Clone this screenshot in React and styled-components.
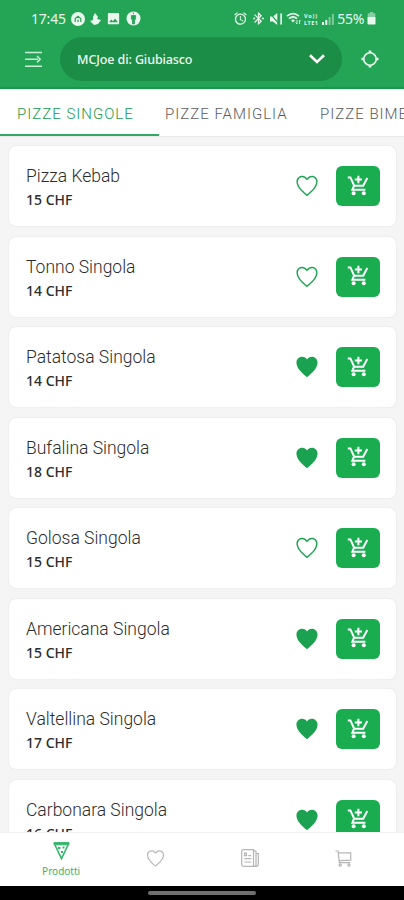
import React, { useState } from 'react'
import styled, { createGlobalStyle } from 'styled-components'
import { MdAlarm, MdBluetoothConnected, MdImage } from 'react-icons/md'
import { IoIosHeart, IoIosHeartEmpty } from 'react-icons/io'

const GlobalStyle = createGlobalStyle`
    * {
        box-sizing: border-box;
    }
    body {
        margin: 0;
        font-family: 'Noto Sans', 'Open Sans', sans-serif;
        background-color: #f5f5f5;
    }
    button {
        font-family: inherit;
        border: none;
        background: none;
        padding: 0;
        margin: 0;
    }
`
const Screen = styled.div`
    width: 404px;
    height: 900px;
    display: flex;
    flex-direction: column;
    overflow: hidden;
`
const Header = styled.header`
    flex: none;
    height: 89px;
    background-color: #24a556;
    border-bottom: 2px solid #129c47;
`
const StatusBar = styled.div`
    height: 37px;
    padding: 0 28px 0 31px;
    display: flex;
    align-items: center;
    justify-content: space-between;
    color: #e9f8ee;
    font-size: 14px;
    line-height: 36px;
`
const StatusGroup = styled.div`
    display: flex;
    align-items: center;
    gap: ${props => props.$gap || '4px'};
`
const StatusText = styled.span`
    letter-spacing: ${props => props.$spacing || '0'};
`
const TopRow = styled.div`
    display: flex;
    align-items: center;
    height: 44px;
`
const MenuButton = styled.button`
    display: flex;
    width: 60px;
    padding-left: 25px;
    color: #c9f0d6;
`
const StorePicker = styled.button`
    display: flex;
    align-items: center;
    justify-content: space-between;
    width: 282px;
    height: 44px;
    border-radius: 22px;
    padding: 0 17px 0 17px;
    background-color: #1b8d46;
    color: #fff;
`
const StoreName = styled.span`
    padding-top: 1px;
    font-size: 12.5px;
    font-weight: 500;
    letter-spacing: -0.1px;
    color: #effaf2;
`
const LocateButton = styled.button`
    display: flex;
    margin-left: 18px;
    color: #e9f8ee;
`
const Tabs = styled.nav`
    flex: none;
    display: flex;
    height: 48px;
    background-color: #fff;
    border-bottom: 1px solid #e9e9e9;
    overflow: hidden;
`
const Tab = styled.button`
    flex: none;
    height: 47px;
    width: ${props => props.$width};
    padding: 4px 0 0 ${props => props.$indent};
    text-align: left;
    white-space: nowrap;
    font-family: Roboto, 'Noto Sans', sans-serif;
    font-size: 15px;
    font-weight: 300;
    letter-spacing: 1px;
    color: ${props => props.$active ? '#169b50' : '#5c5c5c'};
    border-bottom: 2px solid ${props => props.$active ? '#2fa965' : 'transparent'};
`
const List = styled.main`
    flex: 1;
    min-height: 0;
    overflow: hidden;
    display: flex;
    flex-direction: column;
    gap: 10.5px;
    padding: 9px 8px 0 9px;
    background-color: #f5f5f5;
`
const Card = styled.article`
    flex: none;
    display: flex;
    align-items: center;
    height: 80px;
    padding: 0 16px 0 17px;
    border-radius: 7px;
    background-color: #fff;
    box-shadow: 0 0 2px rgba(0, 0, 0, 0.1);
`
const Info = styled.div`
    flex: 1;
    padding-top: 2px;
`
const Name = styled.h2`
    margin: 0;
    font-family: Roboto, 'Noto Sans', sans-serif;
    font-size: 17.5px;
    font-weight: 300;
    line-height: 26px;
    color: #2c2c2c;
`
const Price = styled.p`
    margin: 0;
    font-size: 14px;
    font-weight: 500;
    line-height: 22px;
    color: #2c2c2c;
`
const LikeButton = styled.button`
    display: flex;
    margin-right: 16px;
    color: #1ba250;
`
const AddButton = styled.button`
    display: flex;
    align-items: center;
    justify-content: center;
    width: 44px;
    height: 40px;
    border-radius: 6px;
    background-color: #19ad50;
    color: #fff;
`
const BottomNav = styled.nav`
    flex: none;
    display: flex;
    height: 54px;
    padding: 0 13px 0 14px;
    background-color: #fff;
    border-top: 1px solid #f0f0f0;
`
const NavItem = styled.button`
    flex: 1;
    display: flex;
    flex-direction: column;
    align-items: center;
    justify-content: center;
    padding-bottom: ${props => props.$active ? '0' : '3px'};
    color: ${props => props.$active ? '#35b56c' : '#b5b5b5'};
`
const NavLabel = styled.span`
    font-size: 10px;
    line-height: 14px;
    margin-top: 4px;
`
const SystemBar = styled.div`
    flex: none;
    display: flex;
    justify-content: center;
    height: 14px;
    padding-top: 5px;
    background-color: #000;
`
const HomeHandle = styled.div`
    width: 108px;
    height: 4px;
    border-radius: 2px;
    background-color: #707070;
`

const HomeBadge = () => (
    <svg width="14" height="14" viewBox="0 0 14 14">
        <circle cx="7" cy="7" r="7" fill="currentColor" />
        <path d="M4.2 10V6.6L7 4.2l2.8 2.4V10M7 7.5V10" fill="none" stroke="#24a556" strokeWidth="1.2" />
    </svg>
)

const Drop = () => (
    <svg width="11" height="12" viewBox="0 0 11 12">
        <path d="M5 0l3 4-1 2 4 1-3 4-4 1-4-4 3-1 0-3z" fill="currentColor" />
    </svg>
)

const AppBadge = () => (
    <svg width="15" height="15" viewBox="0 0 15 15">
        <circle cx="7.5" cy="7.5" r="7" fill="currentColor" />
        <path d="M5.4 4.5h4.2v3.8H8.5V13h-2V8.3H5.4zM7.5 1.4v2" fill="#24a556" stroke="#24a556" strokeWidth=".8" />
    </svg>
)

// speaker with a slash and the vibrate bar on its right
const Muted = () => (
    <svg width="14" height="14" viewBox="0 0 14 14" fill="currentColor">
        <path d="M1 4.5h3L8.3 1v12L4 9.5H1zM11.3 1.5H13v11h-1.7z" />
        <path d="M.8 1.2l9.4 11" stroke="#24a556" strokeWidth="1.3" />
    </svg>
)

const Wifi = () => (
    <svg width="15" height="13" viewBox="0 0 15 13" fill="none" stroke="currentColor">
        <path d="M1 4.2q6-5 12 0M3 6.7q4-3.4 8 0" strokeWidth="1.7" />
        <path d="M5 8.3q2-1.6 4 0L7 10.6z" fill="currentColor" stroke="none" />
        <path d="M11 8v4m-1.4-1.4L11 12M13.5 12V8m1.3 1.3L13.5 8" strokeWidth=".9" />
    </svg>
)

const Volte = () => (
    <svg width="15" height="14" viewBox="0 0 15 14" fill="currentColor">
        <text x="0" y="6" fontSize="5.5" fontWeight="700" textLength="13">Vo))</text>
        <text x="0" y="13" fontSize="5.5" fontWeight="700" textLength="14">LTE1</text>
    </svg>
)

const Signal = () => (
    <svg width="12" height="12" viewBox="0 0 12 12" fill="currentColor">
        <path d="M0 9h2v3H0zM3.3 7h2v5h-2z" />
        <path d="M6.6 4h2v8h-2zM9.9 1h2v11h-2z" opacity=".45" />
    </svg>
)

const Battery = () => (
    <svg width="9" height="13" viewBox="0 0 9 13" fill="currentColor">
        <path d="M3 0h3v1.3h2.3V5H.7V1.3H3z" opacity=".5" />
        <path d="M.5 5h8v6.7q0 .8-.8.8H1.3q-.8 0-.8-.8z" />
    </svg>
)

const MenuIcon = () => (
    <svg width="17" height="17" viewBox="0 0 17 17" fill="none" stroke="currentColor" strokeWidth="1.5">
        <path d="M0 1.5h17M0 8.2h13M0 15.2h17M12 5l3.2 3.2-3.2 3.2" />
    </svg>
)

const Chevron = () => (
    <svg width="16" height="10" viewBox="0 0 16 10" fill="none" stroke="currentColor" strokeWidth="2.6">
        <path d="M1 1.3l7 6.7 7-6.7" />
    </svg>
)

const Crosshair = () => (
    <svg width="20" height="20" viewBox="0 0 20 20" fill="none" stroke="currentColor" strokeWidth="1.6">
        <circle cx="10" cy="10" r="6.2" />
        <path d="M10 1.5v2.5M10 16v2.5M1.5 10h2.5M16 10h2.5" strokeWidth="2.6" />
    </svg>
)

// cart with a plus over the basket
const AddCartIcon = () => (
    <svg width="22" height="23" viewBox="0 0 22 23" fill="none" stroke="currentColor" strokeWidth="2">
        <path d="M.8 2.4h2.6l3.8 8.3h9L20.3 3" />
        <path d="M7 10.7l-1.6 4h13" />
        <path d="M11.4.8v7.4M7.8 4.5H15" />
        <circle cx="6.6" cy="18.2" r="2" fill="currentColor" stroke="none" />
        <circle cx="16.8" cy="18.2" r="2" fill="currentColor" stroke="none" />
    </svg>
)

const PizzaIcon = () => (
    <svg width="17" height="19" viewBox="0 0 17 19" fill="none" stroke="currentColor">
        <path d="M1 1.6h15v2.2H1z" fill="currentColor" strokeWidth="1" />
        <path d="M2 4l6.5 13.6L15 4" strokeWidth="1.6" />
        <path d="M5 6h2.4v2H5zM9.5 5.5h2v2h-2zM8 10h2v2H8z" fill="currentColor" stroke="none" />
    </svg>
)

const NewsIcon = () => (
    <svg width="18" height="18" viewBox="0 0 18 18" fill="none" stroke="currentColor" strokeWidth="1.2">
        <path d="M2 .7h10.5v16.6H2.2Q.7 17.3.7 15.8V2Q.7.7 2 .7z" />
        <path d="M12.5 2.2H15v15h-2.5M15 4.6h2.3v11q0 1.7-1.7 1.7H12" />
        <path d="M3.5 4.1h2v2.5h-2zM7.3 6.7h2.8M3.3 9.7h7M3.3 13h7" />
    </svg>
)

const CartIcon = () => (
    <svg width="17" height="17" viewBox="0 0 17 17" fill="none" stroke="currentColor" strokeWidth="1.2">
        <path d="M.5 1h2.6l1.2 11.6h11M3.4 2.8h12.3v7.4L4.2 10.6" />
        <circle cx="5.2" cy="15" r="1.1" />
        <circle cx="14" cy="15" r="1.1" />
    </svg>
)

const menu = [
    { name: 'Pizza Kebab', price: 15, liked: false },
    { name: 'Tonno Singola', price: 14, liked: false },
    { name: 'Patatosa Singola', price: 14, liked: true },
    { name: 'Bufalina Singola', price: 18, liked: true },
    { name: 'Golosa Singola', price: 15, liked: false },
    { name: 'Americana Singola', price: 15, liked: true },
    { name: 'Valtellina Singola', price: 17, liked: true },
    { name: 'Carbonara Singola', price: 16, liked: true },
]

const Product = ({ pizza }) => {
    const [liked, setLiked] = useState(pizza.liked)

    return (
        <Card>
            <Info>
                <Name>{pizza.name}</Name>
                <Price>{pizza.price} CHF</Price>
            </Info>
            <LikeButton onClick={() => setLiked(!liked)}>
                {liked ? <IoIosHeart size={26} /> : <IoIosHeartEmpty size={26} />}
            </LikeButton>
            <AddButton>
                <AddCartIcon />
            </AddButton>
        </Card>
    )
}

const App = () => {
    return (
        <>
        <GlobalStyle />
        <Screen>
            <Header>
                <StatusBar>
                    <StatusGroup $gap="5px">
                        <StatusText $spacing="-0.2px">17:45</StatusText>
                        <HomeBadge />
                        <Drop />
                        <MdImage size={15} />
                        <AppBadge />
                    </StatusGroup>
                    <StatusGroup $gap="3px">
                        <MdAlarm size={15} />
                        <MdBluetoothConnected size={15} />
                        <Muted />
                        <Wifi />
                        <Volte />
                        <Signal />
                        <StatusText $spacing="-0.3px">55%</StatusText>
                        <Battery />
                    </StatusGroup>
                </StatusBar>
                <TopRow>
                    <MenuButton><MenuIcon /></MenuButton>
                    <StorePicker>
                        <StoreName>MCJoe di: Giubiasco</StoreName>
                        <Chevron />
                    </StorePicker>
                    <LocateButton><Crosshair /></LocateButton>
                </TopRow>
            </Header>
            <Tabs>
                <Tab $active $width="159px" $indent="17px">PIZZE SINGOLE</Tab>
                <Tab $width="155px" $indent="6px">PIZZE FAMIGLIA</Tab>
                <Tab $width="140px" $indent="6px">PIZZE BIMBI</Tab>
            </Tabs>
            <List>
                {menu.map(pizza => <Product key={pizza.name} pizza={pizza} />)}
            </List>
            <BottomNav>
                <NavItem $active>
                    <PizzaIcon />
                    <NavLabel>Prodotti</NavLabel>
                </NavItem>
                <NavItem><IoIosHeartEmpty size={21} /></NavItem>
                <NavItem><NewsIcon /></NavItem>
                <NavItem><CartIcon /></NavItem>
            </BottomNav>
            <SystemBar>
                <HomeHandle />
            </SystemBar>
        </Screen>
        </>
    )
}

export default App;
